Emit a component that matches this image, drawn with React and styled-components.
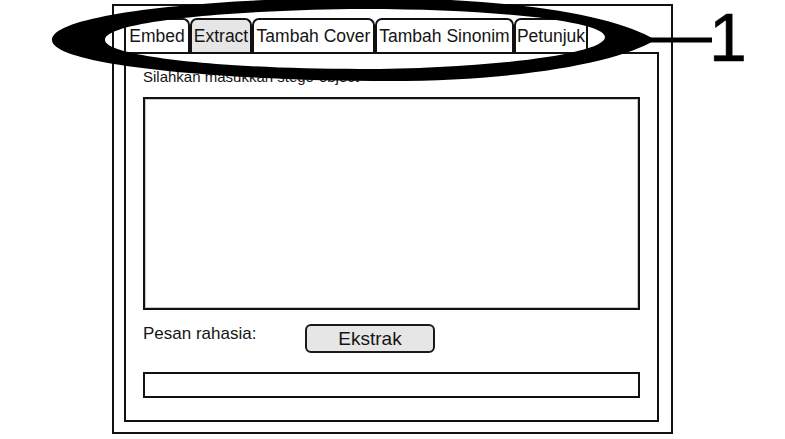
import styled, { createGlobalStyle } from "styled-components";

const GlobalStyle = createGlobalStyle`
  html, body {
    margin: 0;
    padding: 0;
    background: #ffffff;
  }
  body {
    font-family: "Liberation Sans", Arial, sans-serif;
    color: #141414;
    overflow: hidden;
  }
`;

const Page = styled.div`
  position: relative;
  width: 785px;
  height: 439px;
  box-sizing: border-box;
  padding: 4px 0 0 112px;
`;

const Frame = styled.div`
  box-sizing: border-box;
  width: 561px;
  height: 430px;
  border: 2px solid #111;
  padding: 12px 12px 10px 10px;
  display: flex;
  flex-direction: column;
`;

const TabBar = styled.div`
  display: flex;
  height: 34px;
  align-items: stretch;
`;

const Tab = styled.div`
  box-sizing: border-box;
  width: ${(p) => p.$w}px;
  border: 2px solid #111;
  border-bottom: none;
  border-radius: 7px 7px 0 0;
  display: flex;
  align-items: center;
  justify-content: center;
  font-size: 17.5px;
  white-space: nowrap;
  background: ${(p) => (p.$active ? "#e6e6e6" : "#ffffff")};
`;

const Panel = styled.div`
  flex: 1;
  box-sizing: border-box;
  border: 2px solid #111;
  padding: 14px 17px 0 17px;
  display: flex;
  flex-direction: column;
`;

const Label = styled.div`
  font-size: 15px;
  line-height: 17px;
  white-space: nowrap;
`;

const TextArea = styled.div`
  box-sizing: border-box;
  margin-top: 12px;
  height: 213px;
  border: 2px solid #111;
  box-shadow: inset 0 0 0 1px #c8c8c8;
  background: #fff;
`;

const Row = styled.div`
  display: flex;
  align-items: flex-start;
  margin-top: 14px;
`;

const RowLabel = styled.div`
  width: 162px;
  font-size: 17px;
  line-height: 20px;
`;

const Button = styled.div`
  box-sizing: border-box;
  width: 130px;
  height: 29px;
  border: 2px solid #1a1a1a;
  border-radius: 6px;
  background: #e6e6e6;
  display: flex;
  align-items: center;
  justify-content: center;
  font-size: 19px;
`;

const Output = styled.div`
  box-sizing: border-box;
  margin-top: 19px;
  height: 26px;
  border: 2px solid #111;
  background: #fff;
`;

const Annotation = styled.svg`
  position: absolute;
  left: 0;
  top: 0;
  width: 785px;
  height: 439px;
  pointer-events: none;
`;

const Callout = styled.span`
  position: absolute;
  left: 709px;
  top: 3px;
  font-size: 68px;
  line-height: 68px;
  color: #000;
  -webkit-text-stroke: 0.6px #000;
`;

const tabs = [
  { label: "Embed", w: 66 },
  { label: "Extract", w: 62 },
  { label: "Tambah Cover", w: 123 },
  { label: "Tambah Sinonim", w: 139 },
  { label: "Petunjuk", w: 74 },
];

export default function App() {
  return (
    <>
      <GlobalStyle />
      <Page>
        <Frame>
          <TabBar>
            {tabs.map((t) => (
              <Tab key={t.label} $w={t.w} $active={t.label === "Extract"}>
                {t.label}
              </Tab>
            ))}
          </TabBar>
          <Panel>
            <Label>Silahkan masukkan stego-object</Label>
            <TextArea />
            <Row>
              <RowLabel>Pesan rahasia:</RowLabel>
              <Button>Ekstrak</Button>
            </Row>
            <Output />
          </Panel>
        </Frame>

        <Annotation viewBox="0 0 785 439">
          <path
            fillRule="evenodd"
            fill="#000"
            d="M52 40 C52 12 230 -4 390 -2 C530 0 620 18 655 40 C620 62 520 81 390 81 C230 81 52 66 52 40 Z
               M105 40 C105 22 220 11 350 9 C480 8 605 20 605 37 C605 55 480 69 360 69 C220 69 105 56 105 40 Z"
          />
          <line x1="650" y1="40" x2="712" y2="40" stroke="#000" strokeWidth="5" />
        </Annotation>
        <Callout>1</Callout>
      </Page>
    </>
  );
}
